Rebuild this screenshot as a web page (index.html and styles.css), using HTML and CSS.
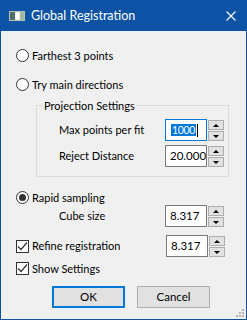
FILE: index.html
```html
<!DOCTYPE html>
<html>
<head>
<meta charset="utf-8">
<link rel="stylesheet" href="styles.css">
</head>
<body>
<div class="window">
  <div class="titlebar">
    <svg class="appicon" width="16" height="10" viewBox="0 0 16 10">
      <rect x="0.5" y="0.5" width="15" height="9" fill="#e8ece8" stroke="#b8c0b8"/>
      <rect x="1" y="1" width="5" height="8" fill="#4f6f6a"/>
      <rect x="11" y="1" width="4" height="8" fill="#9fb8a0"/>
      <rect x="7" y="2" width="3" height="6" fill="#ffffff"/>
    </svg>
    <span class="title">Global Registration</span>
    <svg class="close" width="10" height="10" viewBox="0 0 10 10">
      <path d="M0.5 0.5 L9.5 9.5 M9.5 0.5 L0.5 9.5" stroke="#ffffff" stroke-width="1.1" fill="none"/>
    </svg>
  </div>
  <div class="content">
    <div class="opt r1"><span class="radio"></span><span class="txt">Farthest 3 points</span></div>
    <div class="opt r2"><span class="radio"></span><span class="txt">Try main directions</span></div>
    <div class="group">
      <div class="legend">Projection Settings</div>
      <div class="field g1">
        <span class="lbl">Max points per fit</span>
        <div class="spin">
          <div class="box focus"><span class="sel">1000</span><span class="caret"></span></div>
          <div class="btns"><span class="btn"><i class="up"></i></span><span class="btn"><i class="dn"></i></span></div>
        </div>
      </div>
      <div class="field g2">
        <span class="lbl">Reject Distance</span>
        <div class="spin">
          <div class="box">20.000</div>
          <div class="btns"><span class="btn"><i class="up"></i></span><span class="btn"><i class="dn"></i></span></div>
        </div>
      </div>
    </div>
    <div class="opt r3"><span class="radio on"></span><span class="txt">Rapid sampling</span></div>
    <div class="field cube">
      <span class="lbl">Cube size</span>
      <div class="spin">
        <div class="box">8.317</div>
        <div class="btns"><span class="btn"><i class="up"></i></span><span class="btn"><i class="dn"></i></span></div>
      </div>
    </div>
    <div class="field refine">
      <div class="opt"><span class="check"><svg width="11" height="11" viewBox="0 0 11 11"><path d="M1 5.5 L4 8.5 L10 1.5" stroke="#333" stroke-width="1.2" fill="none"/></svg></span><span class="txt">Refine registration</span></div>
      <div class="spin">
        <div class="box">8.317</div>
        <div class="btns"><span class="btn"><i class="up"></i></span><span class="btn"><i class="dn"></i></span></div>
      </div>
    </div>
    <div class="opt show"><span class="check"><svg width="11" height="11" viewBox="0 0 11 11"><path d="M1 5.5 L4 8.5 L10 1.5" stroke="#333" stroke-width="1.2" fill="none"/></svg></span><span class="txt">Show Settings</span></div>
    <div class="buttons">
      <button class="pbtn default">OK</button>
      <button class="pbtn">Cancel</button>
    </div>
  </div>
  <svg class="grip" width="8" height="8" viewBox="0 0 8 8">
    <rect x="6" y="0" width="2" height="2" fill="#b4b4b4"/>
    <rect x="3" y="3" width="2" height="2" fill="#b4b4b4"/>
    <rect x="6" y="3" width="2" height="2" fill="#b4b4b4"/>
    <rect x="0" y="6" width="2" height="2" fill="#b4b4b4"/>
    <rect x="3" y="6" width="2" height="2" fill="#b4b4b4"/>
    <rect x="6" y="6" width="2" height="2" fill="#b4b4b4"/>
  </svg>
</div>
</body>
</html>
```

FILE: styles.css
```css
* { box-sizing: border-box; }
html, body { margin: 0; padding: 0; background: #f0f0f0; }
body { font-family: Lato, "Noto Sans", sans-serif; font-size: 11px; color: #000; }

.window {
  position: relative;
  width: 247px;
  height: 320px;
  background: #f0f0f0;
  border: 1px solid #0c53a5;
  border-top: none;
  overflow: hidden;
}

.titlebar {
  height: 31px;
  margin: 0 -1px;
  background: #0c53a5;
  display: flex;
  align-items: center;
  color: #fff;
}
.appicon { margin-left: 9px; flex: none; }
.title { margin-left: 6px; line-height: 16px; font-size: 12.5px; }
.close { margin-left: auto; margin-right: 11px; flex: none; }

.content { padding-left: 15px; }

.opt { display: flex; align-items: center; height: 13px; white-space: nowrap; }
.opt .txt { margin-left: 3px; line-height: 16px; }
.r1 { margin-top: 18px; }
.r2 { margin-top: 16px; }
.r3 { margin-top: 14px; }

.radio {
  width: 13px; height: 13px; flex: none;
  border: 1px solid #333;
  border-radius: 50%;
  background: #fff;
  position: relative;
}
.radio.on::after {
  content: "";
  position: absolute;
  left: 2px; top: 2px;
  width: 7px; height: 7px;
  border-radius: 50%;
  background: #333;
}

.check {
  width: 13px; height: 13px; flex: none;
  border: 1px solid #333;
  background: #fff;
  display: flex; align-items: center; justify-content: center;
}

.group {
  margin-top: 14px;
  margin-left: 20px;
  width: 193px;
  border: 1px solid #dcdcdc;
  padding-bottom: 9px;
}
.legend {
  margin-top: -8px;
  margin-left: 6px;
  padding: 0 1px;
  width: max-content;
  background: #f0f0f0;
  line-height: 15px;
}

.field { display: flex; align-items: center; height: 22px; }
.field .lbl { line-height: 16px; white-space: nowrap; }
.g1 { margin-top: 6px; }
.g1 .lbl, .g2 .lbl { margin-left: 22px; width: 106px; }
.g2 { margin-top: 4px; }
.cube { margin-top: 1px; }
.cube .lbl { margin-left: 43px; width: 106px; }
.refine { margin-top: 8px; }
.refine .opt { width: 150px; }

.spin { display: flex; align-items: flex-start; height: 22px; }
.box {
  width: 42px; height: 22px; flex: none;
  border: 1px solid #7a7a7a;
  background: #fff;
  padding-left: 4px;
  display: flex; align-items: center;
  line-height: 16px;
  font-size: 11.5px;
  white-space: nowrap;
  overflow: hidden;
}
.box.focus { border-color: #0078d7; padding-left: 5px; font-size: 10.5px; }
.sel { background: #0078d7; color: #fff; line-height: 12px; padding: 0 1px; letter-spacing: -0.3px; }
.caret { width: 1px; height: 13px; background: #000; margin-left: 1px; }

.btns { margin-left: 1px; padding-top: 1px; display: flex; flex-direction: column; gap: 1px; flex: none; }
.btn {
  width: 16px; height: 10px;
  border: 1px solid #adadad;
  background: #e1e1e1;
  display: flex; align-items: center; justify-content: center;
}
.btn i { width: 0; height: 0; border-left: 3px solid transparent; border-right: 3px solid transparent; }
.btn .up { border-bottom: 3px solid #000; }
.btn .dn { border-top: 3px solid #000; }

.show { margin-top: 5px; }

.buttons { display: flex; gap: 12px; margin-top: 11px; margin-left: 36px; }
.pbtn {
  font-family: inherit; font-size: 11.5px; color: #000;
  width: 73px; height: 22px;
  border: 1px solid #adadad;
  background: #e1e1e1;
  padding: 0;
  line-height: 16px;
}
.pbtn.default { border: 2px solid #0078d7; }

.grip { position: absolute; right: 2px; bottom: 2px; }
```
